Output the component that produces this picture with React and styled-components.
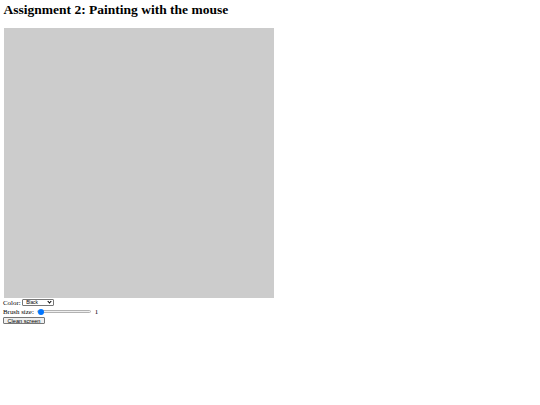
import React, { useRef, useState } from "react";
import styled, { createGlobalStyle } from "styled-components";

const GlobalStyle = createGlobalStyle`
  body {
    margin: 0;
    background: #ffffff;
    font-family: "Liberation Serif", "Times New Roman", serif;
    color: #000;
  }
`;

const Page = styled.div`
  padding: 2px 4px 0 4px;
`;

const Title = styled.h1`
  font-size: 13.5px;
  line-height: 16px;
  font-weight: bold;
  margin: 0 0 10px -0.5px;
`;

const Board = styled.canvas`
  display: block;
  width: 270px;
  height: 270px;
  background: #cccccc;
  cursor: crosshair;
`;

const Row = styled.div`
  display: flex;
  align-items: center;
  height: 9px;
  margin-left: -1px;
  font-size: 6.9px;
  line-height: 9px;
  white-space: nowrap;
`;

const Label = styled.span`
  margin-right: 1.5px;
`;

const SelectWrap = styled.span`
  position: relative;
  display: inline-flex;
  &::after {
    content: "";
    position: absolute;
    right: 3px;
    top: 1.4px;
    width: 2px;
    height: 2px;
    border-right: 0.9px solid #000;
    border-bottom: 0.9px solid #000;
    transform: rotate(45deg);
    pointer-events: none;
  }
`;

const ColorSelect = styled.select`
  appearance: none;
  width: 32px;
  height: 7.5px;
  padding: 0 0 0 3px;
  border: 0.8px solid #767676;
  border-radius: 1px;
  background: #fff;
  font-family: "Liberation Sans", Arial, sans-serif;
  font-size: 4.8px;
  line-height: 5px;
  color: #000;
  box-sizing: border-box;
  outline: none;
`;

const Slider = styled.input`
  appearance: none;
  -webkit-appearance: none;
  width: 54px;
  height: 7px;
  margin: 0 3.5px 0 2px;
  padding: 0;
  background: transparent;
  &::-webkit-slider-runnable-track {
    height: 2.5px;
    border-radius: 2px;
    background: #efefef;
    border: 0.5px solid #b2b2b2;
  }
  &::-webkit-slider-thumb {
    -webkit-appearance: none;
    width: 6px;
    height: 6px;
    margin-top: -2.2px;
    border-radius: 50%;
    background: #0075ff;
    border: none;
  }
`;

const Value = styled.span`
  font-size: 6.9px;
`;

const ButtonRow = styled.div`
  display: flex;
  padding-top: 0.5px;
  margin-left: -1px;
`;

const CleanButton = styled.button`
  height: 7.5px;
  padding: 0 3.5px;
  margin: 0;
  border: 0.8px solid #767676;
  border-radius: 1px;
  background: #efefef;
  font-family: "Liberation Sans", Arial, sans-serif;
  font-size: 5.6px;
  line-height: 6px;
  color: #000;
  box-sizing: border-box;
`;

export default function App() {
  const canvasRef = useRef(null);
  const [color, setColor] = useState("black");
  const [size, setSize] = useState(1);
  const drawing = useRef(false);

  const paint = (e) => {
    if (!drawing.current) return;
    const c = canvasRef.current;
    const r = c.getBoundingClientRect();
    const ctx = c.getContext("2d");
    ctx.fillStyle = color;
    ctx.beginPath();
    ctx.arc(e.clientX - r.left, e.clientY - r.top, size, 0, Math.PI * 2);
    ctx.fill();
  };

  const clear = () => {
    const c = canvasRef.current;
    c.getContext("2d").clearRect(0, 0, c.width, c.height);
  };

  return (
    <Page>
      <GlobalStyle />
      <Title>Assignment 2: Painting with the mouse</Title>
      <Board
        ref={canvasRef}
        width={270}
        height={270}
        onMouseDown={() => (drawing.current = true)}
        onMouseUp={() => (drawing.current = false)}
        onMouseLeave={() => (drawing.current = false)}
        onMouseMove={paint}
      />
      <Row>
        <Label>Color:</Label>
        <SelectWrap>
          <ColorSelect value={color} onChange={(e) => setColor(e.target.value)}>
            <option value="black">Black</option>
            <option value="red">Red</option>
            <option value="green">Green</option>
            <option value="blue">Blue</option>
          </ColorSelect>
        </SelectWrap>
      </Row>
      <Row>
        <Label>Brush size:</Label>
        <Slider
          type="range"
          min="1"
          max="10"
          value={size}
          onChange={(e) => setSize(Number(e.target.value))}
        />
        <Value>{size}</Value>
      </Row>
      <ButtonRow>
        <CleanButton onClick={clear}>Clean screen</CleanButton>
      </ButtonRow>
    </Page>
  );
}
